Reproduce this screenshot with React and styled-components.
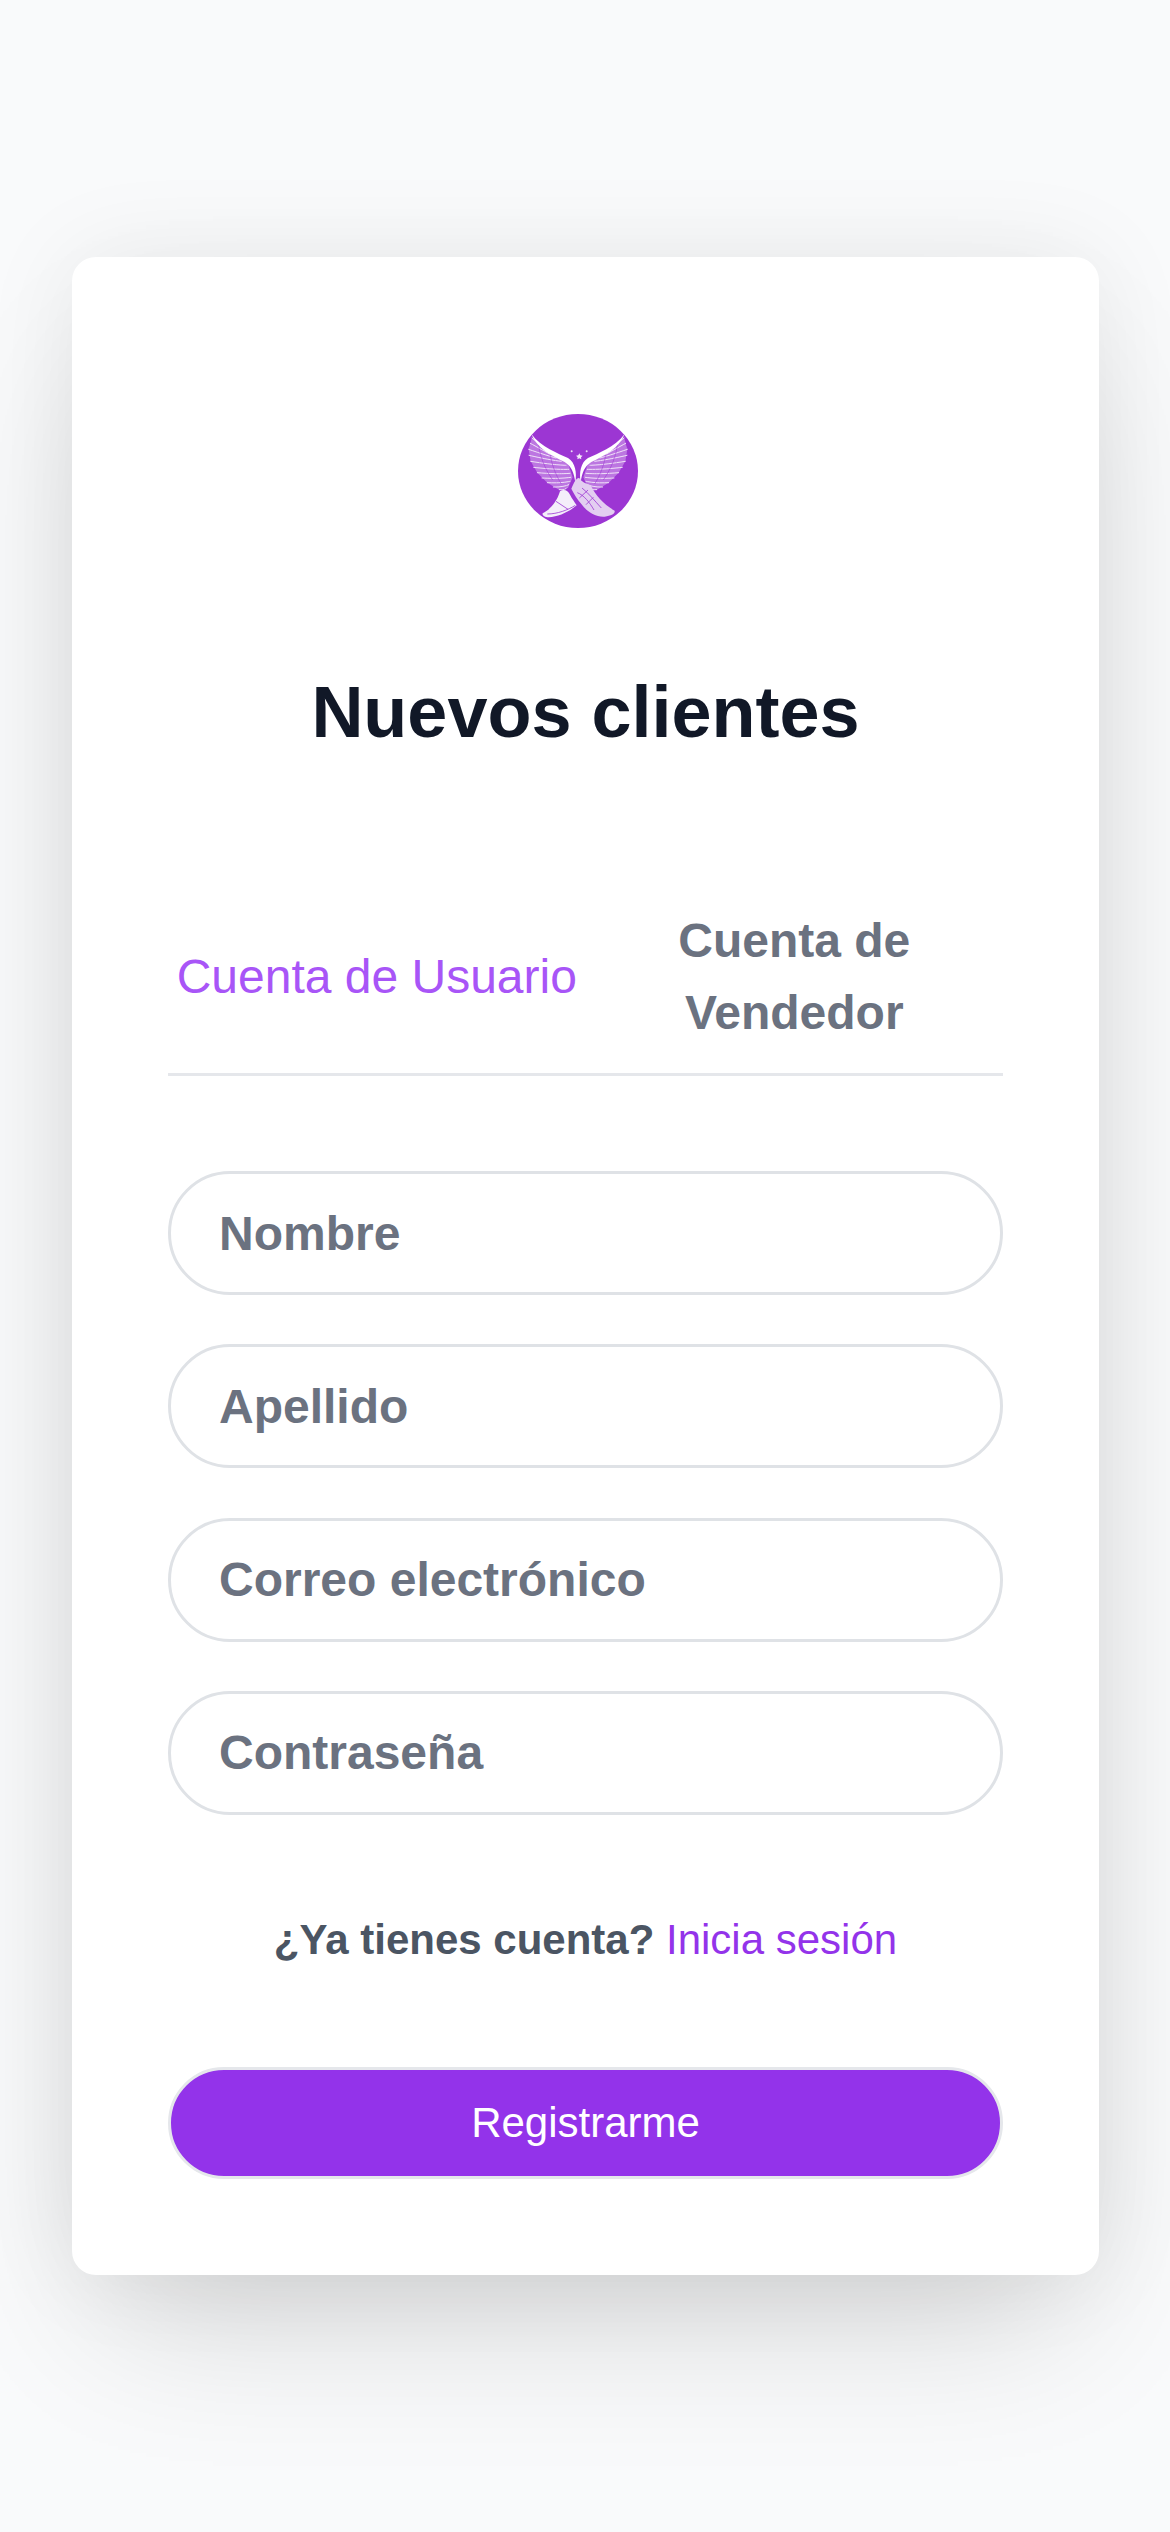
import React from "react";
import styled, { createGlobalStyle } from "styled-components";

const GlobalStyle = createGlobalStyle`
  * {
    box-sizing: border-box;
  }
  html, body {
    margin: 0;
    padding: 0;
  }
  body {
    background-color: #f9fafb;
    font-family: "Liberation Sans", Arial, sans-serif;
  }
`;

const Page = styled.div`
  min-height: 2532px;
  display: flex;
  align-items: center;
  justify-content: center;
  padding: 0 71px 0 72px;
`;

const Card = styled.main`
  width: 100%;
  height: 2018px;
  background: #fff;
  border-radius: 24px;
  padding: 96px;
  box-shadow: 0 75px 150px -36px rgba(0, 0, 0, 0.16), 0 0 100px rgba(0, 0, 0, 0.07);
`;

const LogoWrap = styled.div`
  display: flex;
  justify-content: center;
  margin: 61px 16px 0 0;
  svg {
    display: block;
  }
`;

const Title = styled.h1`
  margin: 136px 0 0;
  font-size: 72px;
  line-height: 96px;
  font-weight: 700;
  text-align: center;
  color: #111827;
`;

const Tabs = styled.div`
  display: grid;
  grid-template-columns: 1fr 1fr;
  align-items: center;
  margin-top: 121px;
  border-bottom: 3px solid #e5e7eb;
`;

const Tab = styled.div`
  padding: 24px 0;
  font-size: 48px;
  line-height: 72px;
  text-align: center;
  font-weight: ${(p) => (p.$active ? 400 : 700)};
  color: ${(p) => (p.$active ? "#a855f7" : "#6b7280")};
  white-space: ${(p) => (p.$active ? "nowrap" : "normal")};
`;

const Form = styled.form`
  display: flex;
  flex-direction: column;
  gap: 49.33px;
  margin-top: 95px;
`;

const Field = styled.div`
  height: 124px;
  display: flex;
  align-items: center;
  padding: 0 48px;
  border: 3px solid #dfe2e6;
  border-radius: 62px;
  font-size: 48px;
  font-weight: 700;
  color: #6b7280;
`;

const LoginLine = styled.p`
  margin: 89px 0 0;
  text-align: center;
  font-size: 42px;
  line-height: 72px;
  font-weight: 700;
  color: #4b5563;
`;

const LoginLink = styled.a`
  font-weight: 400;
  color: #9333ea;
`;

const Submit = styled.button`
  display: block;
  width: 100%;
  height: 112px;
  margin-top: 91px;
  border: 3px solid #e5e7eb;
  border-radius: 56px;
  background: #9333ea;
  color: #fff;
  font-family: inherit;
  font-size: 42px;
`;

// feather lines of the left wing, tip -> root, the right wing mirrors it
const featherTips = [
  [42, 72], [37, 88], [32, 106], [33, 124], [38, 142], [47, 160],
  [58, 176], [72, 192], [88, 206], [106, 219], [124, 227],
];
const featherRoots = [
  [84, 112], [98, 122], [114, 132], [130, 142], [144, 154], [152, 166],
  [156, 178], [158, 190], [156, 202], [152, 212], [146, 222],
];

const Wing = () => (
  <g>
    <path
      d="M42 70 L32 106 L38 142 L58 176 L88 206 L124 228 L150 222 L164 190 L150 148 L84 106 Z"
      fill="#fff"
      fillOpacity="0.32"
    />
    <g fill="none" stroke="#f8f2fc" strokeWidth="2.6" strokeLinecap="round">
      {featherTips.map(([x, y], idx) => {
        const [rx, ry] = featherRoots[idx];
        return (
          <path
            key={idx}
            d={`M${x} ${y} Q${(x + rx) / 2 + 8} ${(y + ry) / 2 + 4} ${rx} ${ry}`}
            strokeDasharray={idx % 2 ? "14 2 22 3" : "24 3 10 2"}
          />
        );
      })}
    </g>
    <g fill="none" stroke="#9c36d3" strokeWidth="1.6">
      <path d="M62 92 C66 125 78 160 104 198" />
      <path d="M96 118 C100 145 110 178 130 210" />
    </g>
    <path
      d="M40 60 C70 100 120 118 150 132 C172 146 177 175 172 206 C168 176 160 156 140 144 C98 124 58 104 40 60 Z"
      fill="#fff"
    />
  </g>
);

const Logo = () => (
  <svg width="120" height="114" viewBox="0 0 360 342" aria-label="Logo">
    <ellipse cx="180" cy="171" rx="180" ry="171" fill="#9c36d3" />
    <Wing />
    <g transform="translate(360 0) scale(-1 1)">
      <Wing />
    </g>
    <circle cx="161" cy="112" r="3" fill="#eadcf5" />
    <circle cx="206" cy="112" r="3" fill="#eadcf5" />
    <path
      d="M184 118 L187 124 L194 125 L189 130 L190 136 L184 133 L178 136 L179 130 L174 125 L181 124 Z"
      fill="#f3e8fa"
    />
    <path
      d="M74 298 C94 288 116 266 126 232 C138 224 150 230 156 242 C162 254 170 264 176 274 C152 294 122 308 92 310 C80 310 72 304 74 298 Z"
      fill="#f4eefa"
    />
    <path
      d="M160 224 C168 204 176 190 184 192 C190 204 204 208 218 214 C232 244 258 272 290 290 C292 300 280 306 260 308 C232 310 208 294 190 270 C178 256 168 240 160 224 Z"
      fill="#e3cef1"
    />
    <g fill="none" stroke="#9c36d3" strokeWidth="2.4">
      <path d="M178 236 C198 244 214 264 228 288" />
      <path d="M192 222 C212 238 228 258 250 282" />
      <path d="M210 228 L184 252" />
      <path d="M226 250 L204 272" />
      <path d="M114 262 C126 270 138 278 150 286" />
      <path d="M88 300 C118 300 150 288 172 274" />
    </g>
  </svg>
);

const fields = ["Nombre", "Apellido", "Correo electrónico", "Contraseña"];

const App = () => (
  <>
    <GlobalStyle />
    <Page>
      <Card>
        <LogoWrap>
          <Logo />
        </LogoWrap>
        <Title>Nuevos clientes</Title>
        <Tabs>
          <Tab $active>Cuenta de Usuario</Tab>
          <Tab>Cuenta de Vendedor</Tab>
        </Tabs>
        <Form>
          {fields.map((name) => (
            <Field key={name}>{name}</Field>
          ))}
        </Form>
        <LoginLine>
          ¿Ya tienes cuenta? <LoginLink>Inicia sesión</LoginLink>
        </LoginLine>
        <Submit type="button">Registrarme</Submit>
      </Card>
    </Page>
  </>
);

export default App;
